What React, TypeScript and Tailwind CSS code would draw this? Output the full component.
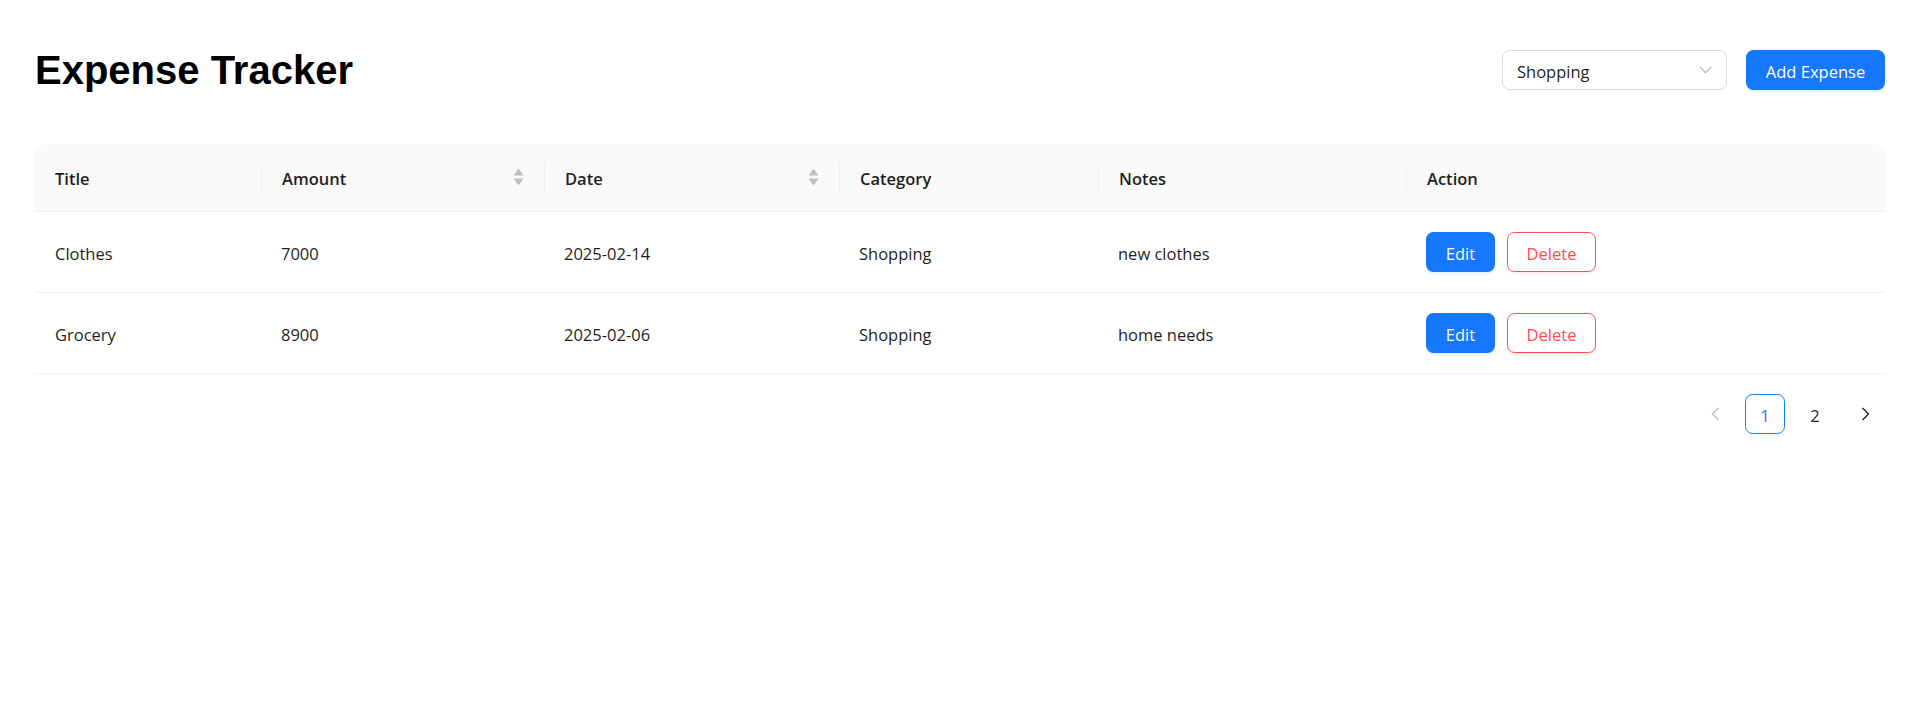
import React from "react";

const font = { fontFamily: '"Open Sans", "Noto Sans", sans-serif' };

function SortIcon() {
  return (
    <svg width="11" height="18" viewBox="0 0 11 18" className="shrink-0">
      <path d="M5.5 0.5 L10.5 7.5 L0.5 7.5 Z" fill="#bfbfbf" />
      <path d="M5.5 17.5 L10.5 10.5 L0.5 10.5 Z" fill="#bfbfbf" />
    </svg>
  );
}

function Chevron({ dir, color }: { dir: "left" | "right"; color: string }) {
  return (
    <svg width="9" height="14" viewBox="0 0 9 14">
      {dir === "left" ? (
        <polyline points="7.5,1 1.5,7 7.5,13" fill="none" stroke={color} strokeWidth="1.4" />
      ) : (
        <polyline points="1.5,1 7.5,7 1.5,13" fill="none" stroke={color} strokeWidth="1.4" />
      )}
    </svg>
  );
}

const rows = [
  { title: "Clothes", amount: "7000", date: "2025-02-14", category: "Shopping", notes: "new clothes" },
  { title: "Grocery", amount: "8900", date: "2025-02-06", category: "Shopping", notes: "home needs" },
];

const cols = "grid grid-cols-[226px_283px_295px_259px_308px_1fr]";

function HeadCell({ label, sort, first }: { label: string; sort?: boolean; first?: boolean }) {
  return (
    <div className="flex h-full items-center">
      {!first && <div className="h-[28px] w-px bg-[#f0f0f0]" />}
      <div className="flex flex-1 items-center justify-between px-[20px]">
        <span className="pt-[3px] font-semibold text-[#1f1f1f]">{label}</span>
        {sort && <SortIcon />}
      </div>
    </div>
  );
}

export default function App() {
  return (
    <div className="min-h-[710px] bg-white pl-[35px] pr-[34px] pt-[47px] text-[16.5px] leading-[1.5715] text-[#1f1f1f]" style={font}>
      <div className="flex items-center justify-between">
        <h1
          className="text-[40px] font-bold leading-[46px] text-black"
          style={{ fontFamily: '"Liberation Sans", Arial, sans-serif' }}
        >
          Expense Tracker
        </h1>
        <div className="flex items-center gap-[19px]">
          <div className="flex h-[40px] w-[225px] items-center justify-between rounded-[7.5px] border border-[#d9d9d9] bg-white pl-[14px] pr-[14px]">
            <span className="pt-[3px] text-[#1f1f1f]">Shopping</span>
            <svg width="13" height="8" viewBox="0 0 13 8">
              <polyline points="0.8,0.8 6.5,6.8 12.2,0.8" fill="none" stroke="#bfbfbf" strokeWidth="1.3" />
            </svg>
          </div>
          <button className="flex h-[40px] w-[139px] items-center justify-center rounded-[7.5px] bg-[#1677ff] pt-[3px] text-white shadow-[0_2.5px_0_rgba(5,145,255,0.1)]">
            Add Expense
          </button>
        </div>
      </div>

      <div className="mt-[51px]">
        <div className={`${cols} h-[68px] rounded-t-[10px] border-b border-[#f0f0f0] bg-[#fafafa]`}>
          <HeadCell label="Title" first />
          <HeadCell label="Amount" sort />
          <HeadCell label="Date" sort />
          <HeadCell label="Category" />
          <HeadCell label="Notes" />
          <HeadCell label="Action" />
        </div>
        {rows.map((r) => (
          <div key={r.title} className={`${cols} h-[81px] items-center border-b border-[#f0f0f0]`}>
            <div className="px-[20px] pt-[3px]">{r.title}</div>
            <div className="px-[20px] pt-[3px]">{r.amount}</div>
            <div className="px-[20px] pt-[3px]">{r.date}</div>
            <div className="px-[20px] pt-[3px]">{r.category}</div>
            <div className="px-[20px] pt-[3px]">{r.notes}</div>
            <div className="flex items-center gap-[12px] px-[20px]">
              <button className="flex h-[40px] w-[69px] items-center justify-center rounded-[7.5px] bg-[#1677ff] pt-[3px] text-white shadow-[0_2.5px_0_rgba(5,145,255,0.1)]">
                Edit
              </button>
              <button className="flex h-[40px] w-[89px] items-center justify-center rounded-[7.5px] border border-[#ff4d4f] bg-white pt-[3px] text-[#ff4d4f] shadow-[0_2.5px_0_rgba(255,38,5,0.06)]">
                Delete
              </button>
            </div>
          </div>
        ))}
      </div>

      <div className="mt-[20px] flex justify-end gap-[10px]">
        <div className="flex h-[40px] w-[40px] items-center justify-center">
          <Chevron dir="left" color="#bfbfbf" />
        </div>
        <div className="flex h-[40px] w-[40px] items-center justify-center rounded-[7.5px] border border-[#1677ff] pt-[3px] text-[#1677ff]">
          1
        </div>
        <div className="flex h-[40px] w-[40px] items-center justify-center pt-[3px] text-[#1f1f1f]">2</div>
        <div className="flex h-[40px] w-[40px] items-center justify-center">
          <Chevron dir="right" color="#1f1f1f" />
        </div>
      </div>
    </div>
  );
}
